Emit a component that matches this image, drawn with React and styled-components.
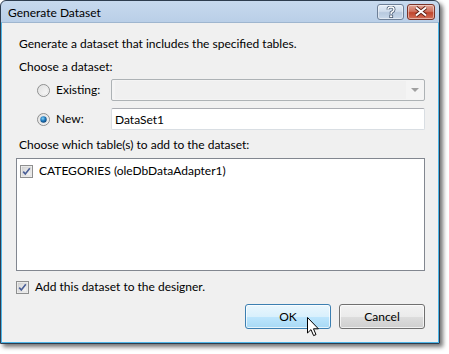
import React from "react";
import styled, { createGlobalStyle } from "styled-components";

const Global = createGlobalStyle`
  html, body { margin: 0; padding: 0; background: #ffffff; }
  body { font-family: "Segoe UI", Lato, "Noto Sans", sans-serif; font-size: 12px; color: #000; }
`;

const Stage = styled.div`
  width: 449px;
  height: 354px;
  position: relative;
  overflow: hidden;
`;

const Window = styled.div`
  width: 440px;
  height: 344px;
  border: 1px solid #2e3d4f;
  border-radius: 6px 6px 0 0;
  background: linear-gradient(#c7d9ee, #b9cee7 22px);
  box-shadow: 3px 3px 4px rgba(0, 0, 0, 0.55);
  display: flex;
  flex-direction: column;
  box-sizing: border-box;
`;

const TitleBar = styled.div`
  height: 21px;
  display: flex;
  align-items: center;
  padding: 0 4px 0 7px;
  flex: none;
`;

const Title = styled.div`
  flex: 1;
  font-size: 12px;
  color: #000;
  padding-top: 1px;
`;

const CaptionButton = styled.div`
  width: ${(p) => p.$w}px;
  height: 16px;
  margin-left: ${(p) => p.$ml || 0}px;
  box-sizing: border-box;
  border: 1px solid ${(p) => (p.$close ? "#7a3328" : "#6d7f97")};
  border-radius: 3px;
  background: ${(p) =>
    p.$close
      ? "linear-gradient(#e0a496 0%, #d1735f 45%, #c0452c 55%, #d4715a 100%)"
      : "linear-gradient(#e4edf7 0%, #cfdcec 45%, #b7c9df 55%, #c8d8ea 100%)"};
  box-shadow: inset 0 0 0 1px rgba(255, 255, 255, 0.45);
  display: flex;
  align-items: center;
  justify-content: center;
`;

const Client = styled.div`
  flex: 1;
  background: #f0f0f0;
  border: 1px solid #4db6e8;
  border-top-color: #9fb6cf;
  display: flex;
  flex-direction: column;
  padding: 13px 13px 0 14px;
`;

const Label = styled.div`
  line-height: 16px;
  height: 16px;
  padding-left: 3px;
  margin-top: ${(p) => p.$mt || 0}px;
  white-space: nowrap;
`;

const OptionRow = styled.div`
  display: flex;
  align-items: center;
  height: 22px;
  margin-top: ${(p) => p.$mt || 0}px;
  padding-left: 21px;
`;

const OptionLabel = styled.span`
  width: 55px;
  margin-left: 6px;
  line-height: 16px;
`;

const Field = styled.div`
  flex: 1;
  height: 22px;
  box-sizing: border-box;
  border: 1px solid ${(p) => (p.$disabled ? "#adb2b5" : "#d9dee3")};
  border-top-color: ${(p) => (p.$disabled ? "#adb2b5" : "#abadb3")};
  border-radius: 2px;
  background: ${(p) => (p.$disabled ? "#f4f4f4" : "#ffffff")};
  display: flex;
  align-items: center;
  padding-left: 3px;
`;

const ComboFill = styled.div`
  flex: 1;
  height: 18px;
  background: #f0f0f0;
`;

const ComboArrow = styled.div`
  width: 18px;
  display: flex;
  justify-content: center;
  align-items: center;
`;

const ListBox = styled.div`
  height: 113px;
  margin-top: 5px;
  box-sizing: border-box;
  border: 1px solid #828790;
  background: #fff;
  padding: 4px 3px;
`;

const CheckRow = styled.div`
  display: flex;
  align-items: center;
  height: 16px;
  margin-top: ${(p) => p.$mt || 0}px;
`;

const CheckText = styled.span`
  margin-left: 6px;
  line-height: 16px;
`;

const ButtonRow = styled.div`
  display: flex;
  justify-content: flex-end;
  gap: 8px;
  margin-top: 9px;
`;

const Button = styled.div`
  width: 86px;
  height: 25px;
  box-sizing: border-box;
  border: 1px solid ${(p) => (p.$hot ? "#3c7fb1" : "#707070")};
  border-radius: 3px;
  background: ${(p) =>
    p.$hot
      ? "linear-gradient(#eaf6fd 0%, #d9f0fc 50%, #bee6fd 50%, #a7d9f5 100%)"
      : "linear-gradient(#f2f2f2 0%, #ebebeb 50%, #dddddd 50%, #cfcfcf 100%)"};
  box-shadow: inset 0 0 0 1px rgba(255, 255, 255, 0.7);
  display: flex;
  align-items: center;
  justify-content: center;
  line-height: 16px;
`;

const Cursor = styled.svg`
  position: absolute;
  left: 307px;
  top: 317px;
`;

const Radio = ({ checked }) => (
  <svg width="13" height="13" viewBox="0 0 13 13">
    <defs>
      <linearGradient id={checked ? "rg1" : "rg0"} x1="0" y1="0" x2="1" y2="1">
        <stop offset="0" stopColor="#dcdcdc" />
        <stop offset="1" stopColor="#ffffff" />
      </linearGradient>
      <radialGradient id="dot" cx="0.4" cy="0.35" r="0.7">
        <stop offset="0" stopColor="#8ad3f5" />
        <stop offset="0.5" stopColor="#1f7cc1" />
        <stop offset="1" stopColor="#0c3d6e" />
      </radialGradient>
    </defs>
    <circle cx="6.5" cy="6.5" r="6" fill={`url(#${checked ? "rg1" : "rg0"})`} stroke="#8e8f8f" strokeWidth="1" />
    <circle cx="6.5" cy="6.5" r="4.5" fill="none" stroke="#e8e8e8" strokeWidth="1" />
    {checked && <circle cx="6.5" cy="6.5" r="3.2" fill="url(#dot)" />}
  </svg>
);

const Check = () => (
  <svg width="13" height="13" viewBox="0 0 13 13">
    <defs>
      <linearGradient id="cg" x1="0" y1="0" x2="1" y2="1">
        <stop offset="0" stopColor="#d4d4d4" />
        <stop offset="1" stopColor="#f8f8f8" />
      </linearGradient>
    </defs>
    <rect x="0.5" y="0.5" width="12" height="12" fill="#f4f4f4" stroke="#8e8f8f" />
    <rect x="2" y="2" width="9" height="9" fill="url(#cg)" stroke="#c8c8c8" strokeWidth="0.5" />
    <path d="M3.2 6.6 L5.3 8.9 L9.8 3.3" fill="none" stroke="#4a5f97" strokeWidth="1.6" />
  </svg>
);

export default function App() {
  return (
    <Stage>
      <Global />
      <Window>
        <TitleBar>
          <Title>Generate Dataset</Title>
          <CaptionButton $w={27}>
            <svg width="10" height="12" viewBox="0 0 10 12">
              <path d="M2 3.5 Q2 1 5 1 Q8 1 8 3.5 Q8 5 6 6 L5.2 6.6 L5.2 8" fill="none" stroke="#4b5d75" strokeWidth="3" />
              <path d="M2 3.5 Q2 1 5 1 Q8 1 8 3.5 Q8 5 6 6 L5.2 6.6 L5.2 8" fill="none" stroke="#ffffff" strokeWidth="1.4" />
              <rect x="3.7" y="9" width="3" height="2.6" fill="#ffffff" stroke="#4b5d75" strokeWidth="0.8" />
            </svg>
          </CaptionButton>
          <CaptionButton $w={28} $ml={3} $close>
            <svg width="14" height="11" viewBox="0 0 14 11">
              <path d="M2 1.5 L12 9.5 M12 1.5 L2 9.5" stroke="#5a1d12" strokeWidth="3.6" />
              <path d="M2 1.5 L12 9.5 M12 1.5 L2 9.5" stroke="#ffffff" strokeWidth="2" />
            </svg>
          </CaptionButton>
        </TitleBar>
        <Client>
          <Label>Generate a dataset that includes the specified tables.</Label>
          <Label $mt={7}>Choose a dataset:</Label>
          <OptionRow $mt={4}>
            <Radio />
            <OptionLabel>Existing:</OptionLabel>
            <Field $disabled>
              <ComboFill />
              <ComboArrow>
                <svg width="8" height="4" viewBox="0 0 8 4">
                  <path d="M0 0 L8 0 L4 4 Z" fill="#a0a0a0" />
                </svg>
              </ComboArrow>
            </Field>
          </OptionRow>
          <OptionRow $mt={7}>
            <Radio checked />
            <OptionLabel>New:</OptionLabel>
            <Field>DataSet1</Field>
          </OptionRow>
          <Label $mt={7}>Choose which table(s) to add to the dataset:</Label>
          <ListBox>
            <CheckRow>
              <Check />
              <CheckText>CATEGORIES (oleDbDataAdapter1)</CheckText>
            </CheckRow>
          </ListBox>
          <CheckRow $mt={8}>
            <Check />
            <CheckText>Add this dataset to the designer.</CheckText>
          </CheckRow>
          <ButtonRow>
            <Button $hot>OK</Button>
            <Button>Cancel</Button>
          </ButtonRow>
        </Client>
      </Window>
      <Cursor width="13" height="20" viewBox="0 0 13 20">
        <path d="M0.5 0.5 L0.5 16 L4 12.6 L6.6 18.6 L9 17.6 L6.5 11.8 L11.4 11.8 Z" fill="#ffffff" stroke="#000000" strokeWidth="1" />
      </Cursor>
    </Stage>
  );
}
